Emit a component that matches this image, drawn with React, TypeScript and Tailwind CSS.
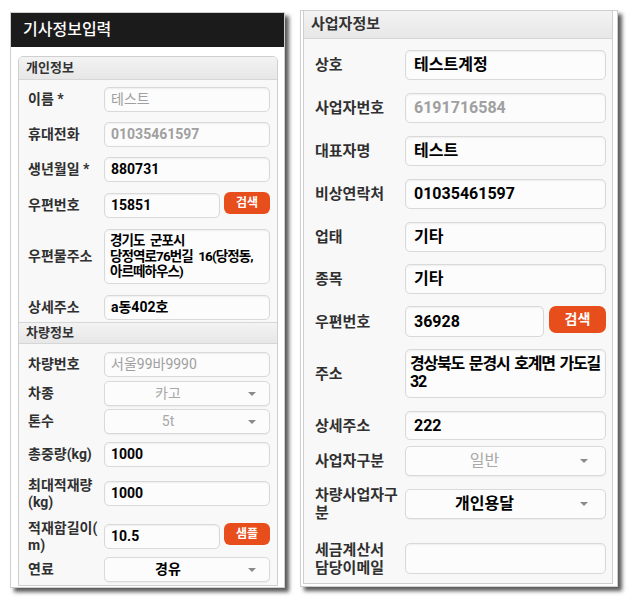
import React from 'react';

type BoxProps = {
    value?: string;
    muted?: boolean;
    light?: boolean;
    size: 'sm' | 'lg';
};

function Box({ value, muted, light, size }: BoxProps) {
    const text = size === 'sm' ? 'text-[14px] px-[6px]' : 'text-[16px] px-[8px]';
    const color = muted ? 'text-[#a0a0a0]' : 'text-black';
    const weight = light ? 'font-normal' : 'font-bold';
    return (
        <div className={`flex-1 h-full min-w-0 rounded-[5px] border border-[#d9d9d9] bg-[#fcfcfc] shadow-[inset_0_1px_2px_rgba(0,0,0,0.06)] flex items-center whitespace-nowrap ${text} ${color} ${weight}`}>
            {value}
        </div>
    );
}

function Select({ value, muted, size }: { value: string; muted?: boolean; size: 'sm' | 'lg' }) {
    const text = size === 'sm' ? 'text-[14px] pr-[38px]' : 'text-[16px] pr-[42px]';
    const arrow = size === 'sm' ? 'right-[13px]' : 'right-[17px]';
    return (
        <div className={`relative flex-1 h-full rounded-[5px] border border-[#d9d9d9] bg-[#fcfcfc] shadow-[0_1px_1px_rgba(0,0,0,0.05)] flex items-center justify-center ${text} ${muted ? 'text-[#a8a8a8] font-normal' : 'text-black font-bold'}`}>
            {value}
            {/* dropdown caret */}
            <span className={`absolute top-1/2 -translate-y-1/2 ${arrow} w-0 h-0 border-l-[4px] border-r-[4px] border-t-[4px] border-l-transparent border-r-transparent border-t-[#8a8a8a]`} />
        </div>
    );
}

function Btn({ children, size }: { children: React.ReactNode; size: 'sm' | 'lg' }) {
    return size === 'sm' ? (
        <div className="w-[46px] h-[22px] shrink-0 rounded-[6px] bg-[#e84e1b] text-white text-[12px] font-bold flex items-center justify-center -mt-[1px] self-start">
            {children}
        </div>
    ) : (
        <div className="w-[57px] h-[27px] shrink-0 rounded-[7px] bg-[#e84e1b] text-white text-[14px] font-bold flex items-center justify-center self-start">
            {children}
        </div>
    );
}

function LRow({ label, className, children }: { label: React.ReactNode; className: string; children: React.ReactNode }) {
    return (
        <div className={`flex items-center ${className}`}>
            <div className="w-[76px] shrink-0 text-[14px] leading-[17px] font-bold text-[#303030]">{label}</div>
            <div className="flex-1 min-w-0 flex gap-[4px] h-full items-center">{children}</div>
        </div>
    );
}

function RRow({ label, className, children }: { label: React.ReactNode; className: string; children: React.ReactNode }) {
    return (
        <div className={`flex items-center ${className}`}>
            <div className="w-[90px] shrink-0 text-[15px] leading-[18px] font-bold text-[#303030]">{label}</div>
            <div className="flex-1 min-w-0 flex gap-[5px] h-full items-center">{children}</div>
        </div>
    );
}

export default function App() {
    return (
        <div className="min-h-[600px] bg-white font-['Roboto','Noto_Sans_CJK_KR',sans-serif] flex items-start pl-[10px] pt-[10px] gap-[15px]">
            {/* Left screen: 기사정보입력 */}
            <div className="w-[275px] h-[576px] mt-[2px] bg-white border border-[#cfcfcf] shadow-[4px_4px_4px_rgba(0,0,0,0.65)] flex flex-col">
                <div className="h-[34px] bg-[#1b1b1b] text-white text-[16px] font-medium pl-[12px] flex items-center shrink-0">
                    기사정보입력
                </div>
                <div className="pl-[7px] pr-[6px] pt-[9px]">
                    <div className="border border-[#cfcfcf] rounded-t-[5px] bg-[#f8f8f8] pb-[3px]">
                        <div className="h-[23px] bg-gradient-to-b from-[#f3f3f3] to-[#e7e7e7] border-b border-[#d6d6d6] rounded-t-[4px] pl-[7px] flex items-center text-[13px] font-bold text-[#333]">
                            개인정보
                        </div>
                        <div className="pl-[9px] pr-[7px]">
                            <LRow label="이름 *" className="h-[25px] mt-[7px]">
                                <Box size="sm" value="테스트" muted light />
                            </LRow>
                            <LRow label="휴대전화" className="h-[25px] mt-[10px]">
                                <Box size="sm" value="01035461597" muted />
                            </LRow>
                            <LRow label="생년월일 *" className="h-[25px] mt-[10px]">
                                <Box size="sm" value="880731" />
                            </LRow>
                            <LRow label="우편번호" className="h-[25px] mt-[11px]">
                                <Box size="sm" value="15851" />
                                <Btn size="sm">검색</Btn>
                            </LRow>
                            <LRow label="우편물주소" className="h-[55px] mt-[11px]">
                                <div className="flex-1 h-full min-w-0 rounded-[5px] border border-[#d9d9d9] bg-[#fcfcfc] shadow-[inset_0_1px_2px_rgba(0,0,0,0.06)] px-[5px] pt-[3px] text-[13.5px] leading-[15.5px] tracking-[-0.9px] [word-spacing:3px] font-bold text-black whitespace-nowrap overflow-hidden">
                                    <div>경기도 군포시</div>
                                    <div>당정역로76번길 16(당정동,</div>
                                    <div>아르떼하우스)</div>
                                </div>
                            </LRow>
                            <LRow label="상세주소" className="h-[25px] mt-[11px]">
                                <Box size="sm" value="a동402호" />
                            </LRow>
                        </div>
                        <div className="h-[22px] mt-[2px] bg-gradient-to-b from-[#f3f3f3] to-[#e7e7e7] border-y border-[#d6d6d6] pl-[7px] flex items-center text-[13px] font-bold text-[#333]">
                            차량정보
                        </div>
                        <div className="pl-[9px] pr-[7px]">
                            <LRow label="차량번호" className="h-[25px] mt-[8px]">
                                <Box size="sm" value="서울99바9990" muted light />
                            </LRow>
                            <LRow label="차종" className="h-[25px] mt-[4px]">
                                <Select size="sm" value="카고" muted />
                            </LRow>
                            <LRow label="톤수" className="h-[25px] mt-[3px]">
                                <Select size="sm" value="5t" muted />
                            </LRow>
                            <LRow label="총중량(kg)" className="h-[25px] mt-[8px]">
                                <Box size="sm" value="1000" />
                            </LRow>
                            <LRow label={<>최대적재량<br />(kg)</>} className="h-[25px] mt-[14px]">
                                <Box size="sm" value="1000" />
                            </LRow>
                            <LRow label={<>적재함길이(<br />m)</>} className="h-[25px] mt-[18px]">
                                <Box size="sm" value="10.5" />
                                <Btn size="sm">샘플</Btn>
                            </LRow>
                            <LRow label="연료" className="h-[25px] mt-[8px]">
                                <Select size="sm" value="경유" />
                            </LRow>
                        </div>
                    </div>
                </div>
            </div>

            {/* Right screen: 사업자정보 */}
            <div className="w-[318px] h-[577px] bg-white border border-[#cfcfcf] shadow-[4px_4px_4px_rgba(0,0,0,0.65)] pl-[2px] pr-[4px]">
                <div className="border border-t-0 border-[#cfcfcf] bg-[#f8f8f8] pb-[9px]">
                    <div className="h-[28px] bg-gradient-to-b from-[#f3f3f3] to-[#e7e7e7] border-b border-[#d6d6d6] pl-[7px] flex items-center text-[15px] font-bold text-[#333]">
                        사업자정보
                    </div>
                    <div className="pl-[11px] pr-[6px]">
                        <RRow label="상호" className="h-[30px] mt-[11px]">
                            <Box size="lg" value="테스트계정" />
                        </RRow>
                        <RRow label="사업자번호" className="h-[30px] mt-[13px]">
                            <Box size="lg" value="6191716584" muted />
                        </RRow>
                        <RRow label="대표자명" className="h-[30px] mt-[13px]">
                            <Box size="lg" value="테스트" />
                        </RRow>
                        <RRow label="비상연락처" className="h-[30px] mt-[13px]">
                            <Box size="lg" value="01035461597" />
                        </RRow>
                        <RRow label="업태" className="h-[30px] mt-[13px]">
                            <Box size="lg" value="기타" />
                        </RRow>
                        <RRow label="종목" className="h-[30px] mt-[12px]">
                            <Box size="lg" value="기타" />
                        </RRow>
                        <RRow label="우편번호" className="h-[31px] mt-[12px]">
                            <Box size="lg" value="36928" />
                            <Btn size="lg">검색</Btn>
                        </RRow>
                        <RRow label="주소" className="h-[49px] mt-[12px]">
                            <div className="flex-1 h-full min-w-0 rounded-[5px] border border-[#d9d9d9] bg-[#fcfcfc] shadow-[inset_0_1px_2px_rgba(0,0,0,0.06)] px-[4px] pt-[5px] text-[16px] leading-[18px] tracking-[-1.2px] [word-spacing:2px] font-bold text-black whitespace-nowrap overflow-hidden">
                                <div>경상북도 문경시 호계면 가도길</div>
                                <div>32</div>
                            </div>
                        </RRow>
                        <RRow label="상세주소" className="h-[29px] mt-[13px]">
                            <Box size="lg" value="222" />
                        </RRow>
                        <RRow label="사업자구분" className="h-[30px] mt-[6px]">
                            <Select size="lg" value="일반" muted />
                        </RRow>
                        <RRow label={<>차량사업자구<br />분</>} className="h-[30px] mt-[13px]">
                            <Select size="lg" value="개인용달" />
                        </RRow>
                        <RRow label={<>세금계산서<br />담당이메일</>} className="h-[31px] mt-[24px]">
                            <Box size="lg" />
                        </RRow>
                    </div>
                </div>
            </div>
        </div>
    );
}
